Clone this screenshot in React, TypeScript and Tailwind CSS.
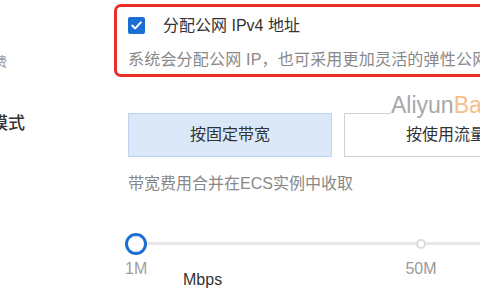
const font = { fontFamily: '"Liberation Sans", "Noto Sans CJK SC", sans-serif' };

const App = () => {
  return (
    <div style={font} className="relative w-[480px] h-[300px] overflow-hidden bg-white pt-[4px]">
      {/* public ip row */}
      <div className="flex">
        <div className="w-[128px] shrink-0 pt-[50px]">
          <div className="-ml-[6px] text-[13px] leading-[16px] text-[#999]">费</div>
        </div>
        <div className="-ml-[14px] w-[400px] h-[73px] shrink-0 border-[3px] border-[#ea2f26] rounded-[7px] pt-[10px] pl-[11px]">
          <div className="flex items-center">
            <div className="w-[17px] h-[17px] rounded-[2px] bg-[#1b6fd3] flex items-center justify-center">
              <svg width="11" height="9" viewBox="0 0 11 9" fill="none">
                <path d="M1.2 4.6 L4.2 7.4 L9.8 1.4" stroke="white" strokeWidth="2" strokeLinecap="round" strokeLinejoin="round" />
              </svg>
            </div>
            <span className="ml-[18px] text-[16px] leading-[17px] text-[#333] whitespace-nowrap">分配公网 IPv4 地址</span>
          </div>
          <div className="mt-[16px] text-[16px] leading-[20px] text-[#888] whitespace-nowrap tracking-[0.2px]">
            系统会分配公网 IP，也可采用更加灵活的弹性公网 IP
          </div>
        </div>
      </div>

      {/* billing mode */}
      <div className="flex mt-[36px]">
        <div className="w-[128px] shrink-0 pt-[2px]">
          <div className="-ml-[9px] text-[17px] leading-[18px] font-medium text-[#333]">模式</div>
        </div>
        <div className="flex gap-[12px] shrink-0">
          <button className="w-[204px] h-[44px] bg-[#dbe8f8] border border-[#bcd4ef] text-[16px] text-[#333]">
            按固定带宽
          </button>
          <button className="w-[204px] h-[44px] bg-white border border-[#d2d2d2] text-[16px] text-[#333] whitespace-nowrap">
            按使用流量
          </button>
        </div>
      </div>

      <div className="pl-[128px] mt-[17px] text-[16px] leading-[20px] text-[#888] whitespace-nowrap">
        带宽费用合并在ECS实例中收取
      </div>

      {/* bandwidth slider */}
      <div className="relative mt-[39px] h-[22px]">
        <div className="absolute left-[136px] right-0 top-[9px] h-[3px] bg-[#e8e8e8]" />
        <div className="absolute left-[416px] top-[6px] w-[10px] h-[10px] rounded-full border-2 border-[#dcdcdc] bg-white" />
        <div className="absolute left-[125px] top-0 w-[22px] h-[22px] rounded-full border-[3px] border-[#1b6fd3] bg-white" />
      </div>
      <div className="relative h-[30px] mt-[5px]">
        <span className="absolute left-[125px] top-0 w-[22px] text-center text-[16px] leading-[18px] text-[#a0a0a0]">1M</span>
        <span className="absolute left-[401px] top-0 w-[40px] text-center text-[16px] leading-[18px] text-[#999] bg-white">50M</span>
        <div className="pl-[183px] pt-[11px] text-[16px] leading-[18px] text-[#333]">Mbps</div>
      </div>

      {/* watermark */}
      <div className="absolute left-[391px] top-[95px] text-[23px] leading-[21px] font-medium bg-white whitespace-nowrap">
        <span className="text-[#a8a8a8]">Aliyun</span>
        <span className="text-[#f4bf8a]">Baike</span>
      </div>
    </div>
  );
};

export default App;
